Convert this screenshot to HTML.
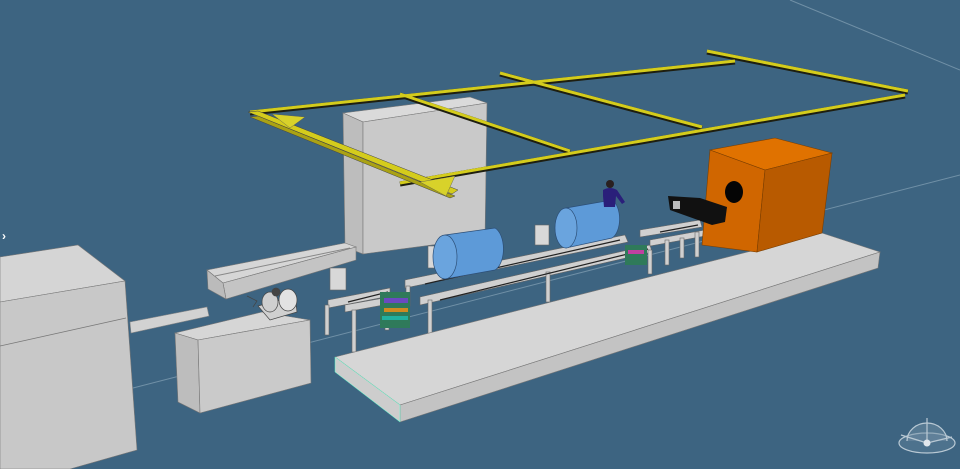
<!DOCTYPE html>
<html><head><meta charset="utf-8"><style>
html,body{margin:0;padding:0;background:#3d6481;overflow:hidden}
svg{display:block}
</style></head><body>
<svg width="960" height="469" viewBox="0 0 960 469" xmlns="http://www.w3.org/2000/svg">
<rect width="960" height="469" fill="#3d6481"/>
<g stroke="#7d9bb0" stroke-width="1" opacity="0.8">
<line x1="133" y1="388" x2="960" y2="175"/>
<line x1="790" y1="0" x2="960" y2="70"/>
</g>
<text x="2" y="240" fill="#fff" font-family="Liberation Sans,sans-serif" font-size="12" font-weight="bold">›</text>

<!-- gray wall -->
<polygon points="343,113 470,97 487,103 363,122" fill="#dadada" stroke="#777" stroke-width="0.6"/>
<polygon points="343,113 363,122 363,254 345,247" fill="#bdbdbd" stroke="#777" stroke-width="0.6"/>
<polygon points="363,122 487,103 485,238 363,254" fill="#c9c9c9" stroke="#777" stroke-width="0.6"/>

<!-- rail beam -->
<polygon points="207,270 345,243 356,247 223,283" fill="#d6d6d6" stroke="#777" stroke-width="0.6"/>
<line x1="215" y1="276" x2="350" y2="248" stroke="#888" stroke-width="1"/>
<polygon points="223,283 356,247 356,260 226,299" fill="#c4c4c4" stroke="#777" stroke-width="0.6"/>
<polygon points="207,270 223,283 226,299 208,289" fill="#bbb" stroke="#777" stroke-width="0.6"/>

<!-- crane -->
<g stroke-linecap="butt">
<g stroke="#1e1e10" stroke-width="5">
<line x1="250" y1="113" x2="735" y2="62"/>
<line x1="707" y1="52" x2="908" y2="92"/>
<line x1="500" y1="74" x2="702" y2="128"/>
<line x1="400" y1="95" x2="570" y2="152"/>
<line x1="400" y1="184" x2="905" y2="96"/>
</g>
<g stroke="#d4cc1c" stroke-width="3">
<line x1="250" y1="112" x2="735" y2="61"/>
<line x1="707" y1="51" x2="908" y2="91"/>
<line x1="500" y1="73" x2="702" y2="127"/>
<line x1="400" y1="94" x2="570" y2="151"/>
<line x1="400" y1="183" x2="905" y2="95"/>
</g>
</g>
<polygon points="248,112 258,111 458,190 452,194" fill="#d4cc1c" stroke="#444" stroke-width="0.5"/>
<polygon points="250,117 258,116 455,196 450,198" fill="#aaa214" stroke="#444" stroke-width="0.5"/>
<polygon points="272,114 305,117 290,128" fill="#d8d22a" stroke="#555" stroke-width="0.4"/>
<polygon points="420,182 455,176 446,196" fill="#d8d22a" stroke="#555" stroke-width="0.4"/>

<!-- left big box -->
<polygon points="0,257 78,245 125,281 0,302" fill="#d5d5d5" stroke="#777" stroke-width="0.6"/>
<polygon points="0,302 125,281 137,450 70,469 0,469" fill="#c8c8c8" stroke="#777" stroke-width="0.6"/>
<line x1="0" y1="346" x2="126" y2="318" stroke="#777" stroke-width="0.8"/>

<!-- pipe -->
<polygon points="130,322 207,307 209,316 131,333" fill="#d2d2d2" stroke="#888" stroke-width="0.6"/>

<!-- middle box -->
<polygon points="175,333 262,312 310,320 198,340" fill="#d6d6d6" stroke="#777" stroke-width="0.6"/>
<polygon points="175,333 198,340 200,413 178,402" fill="#bdbdbd" stroke="#777" stroke-width="0.6"/>
<polygon points="198,340 310,320 311,383 200,413" fill="#cacaca" stroke="#777" stroke-width="0.6"/>
<g stroke="#444" stroke-width="0.7">
<polygon points="258,306 295,296 297,312 270,320" fill="#d0d0d0"/>
<ellipse cx="288" cy="300" rx="9" ry="11" fill="#e2e2e2"/>
<ellipse cx="270" cy="302" rx="8" ry="10" fill="#cfcfcf"/>
<circle cx="276" cy="292" r="4" fill="#444"/>
<path d="M247 296 l10 5 l-4 6" fill="none"/>
</g>

<!-- conveyor frames -->
<g fill="#d0d0d0" stroke="#666" stroke-width="0.6">
<rect x="330" y="268" width="16" height="22" fill="#d8d8d8"/>
<polygon points="328,300 390,288 390,296 328,308"/>
<polygon points="345,305 395,296 395,303 345,312"/>
<rect x="325" y="305" width="4" height="30"/>
<rect x="352" y="310" width="4" height="42"/>
<rect x="385" y="300" width="4" height="30"/>
<rect x="428" y="246" width="14" height="22" fill="#d8d8d8"/>
<rect x="535" y="225" width="14" height="20" fill="#d8d8d8"/>
<polygon points="405,280 625,235 628,242 405,288"/>
<polygon points="420,297 650,245 652,252 420,305"/>
<rect x="428" y="300" width="4" height="34"/>
<rect x="546" y="272" width="4" height="30"/>
<rect x="648" y="250" width="4" height="24"/>
<rect x="406" y="286" width="4" height="20"/>
<polygon points="640,230 700,220 702,227 640,237"/>
<polygon points="650,240 705,230 705,236 650,246"/>
<rect x="665" y="240" width="4" height="25"/>
<rect x="695" y="232" width="4" height="25"/>
<rect x="680" y="238" width="4" height="20"/>
</g>
<g stroke="#222" stroke-width="1.2">
<line x1="348" y1="302" x2="388" y2="292"/>
<line x1="425" y1="284" x2="620" y2="240"/>
<line x1="440" y1="300" x2="648" y2="249"/>
<line x1="660" y1="232" x2="698" y2="225"/>
</g>
<g>
<rect x="380" y="292" width="30" height="36" fill="#2f7a5a"/>
<rect x="384" y="298" width="24" height="5" fill="#6a4ac0"/>
<rect x="384" y="308" width="24" height="4" fill="#d08a20"/>
<rect x="382" y="316" width="26" height="4" fill="#20b0a0"/>
<rect x="625" y="245" width="22" height="20" fill="#2f7a5a"/>
<rect x="628" y="250" width="16" height="4" fill="#c040a0"/>
</g>

<!-- cylinders -->
<g stroke="#2c4f78" stroke-width="0.7">
<path d="M445,235 L495,228 A12,22 0 0 1 495,270 L445,279 Z" fill="#5d9ad8"/>
<ellipse cx="445" cy="257" rx="12" ry="22" fill="#6aa4de"/>
<path d="M566,208 L612,200 A11,20 0 0 1 612,238 L566,248 Z" fill="#5d9ad8"/>
<ellipse cx="566" cy="228" rx="11" ry="20" fill="#6aa4de"/>
</g>

<!-- man -->
<circle cx="610" cy="184" r="4" fill="#2a2020"/>
<path d="M603,190 Q610,186 617,190 L625,202 L622,204 L616,196 L615,207 L604,207 L603,196 Z" fill="#2a1f7a"/>

<!-- platform -->
<polygon points="335,357 822,233 880,252 400,405" fill="#d6d6d6" stroke="#777" stroke-width="0.6"/>
<polygon points="400,405 880,252 878,268 400,422" fill="#c3c3c3" stroke="#777" stroke-width="0.6"/>
<polygon points="335,357 400,405 400,422 335,372" fill="#cdcdcd" stroke="#5fc" stroke-width="0.5"/>

<!-- orange box -->
<polygon points="710,150 775,138 832,153 765,170" fill="#e07200" stroke="#7a3e00" stroke-width="0.6"/>
<polygon points="710,150 765,170 757,252 702,245" fill="#d06600" stroke="#7a3e00" stroke-width="0.6"/>
<polygon points="765,170 832,153 822,233 757,252" fill="#b85a00" stroke="#7a3e00" stroke-width="0.6"/>
<ellipse cx="734" cy="192" rx="9" ry="11" fill="#050505"/>
<polygon points="668,196 700,198 727,207 725,222 712,225 670,210" fill="#111"/>
<rect x="673" y="201" width="7" height="8" fill="#bbb"/>

<!-- gizmo -->
<g transform="translate(927,435)" fill="none" stroke="#cfdbe3" stroke-width="1.2" opacity="0.85">
<ellipse cx="0" cy="8" rx="28" ry="10" fill="#6d8ea5" fill-opacity="0.4"/>
<path d="M-20,6 A20,18 0 0 1 20,6" fill="#7b97ab" fill-opacity="0.5"/>
<line x1="0" y1="8" x2="0" y2="-17"/>
<line x1="0" y1="8" x2="-26" y2="0"/>
<line x1="0" y1="8" x2="25" y2="2"/>
<circle cx="0" cy="8" r="3.5" fill="#fff" stroke="none"/>
</g>
</svg>
</body></html>
